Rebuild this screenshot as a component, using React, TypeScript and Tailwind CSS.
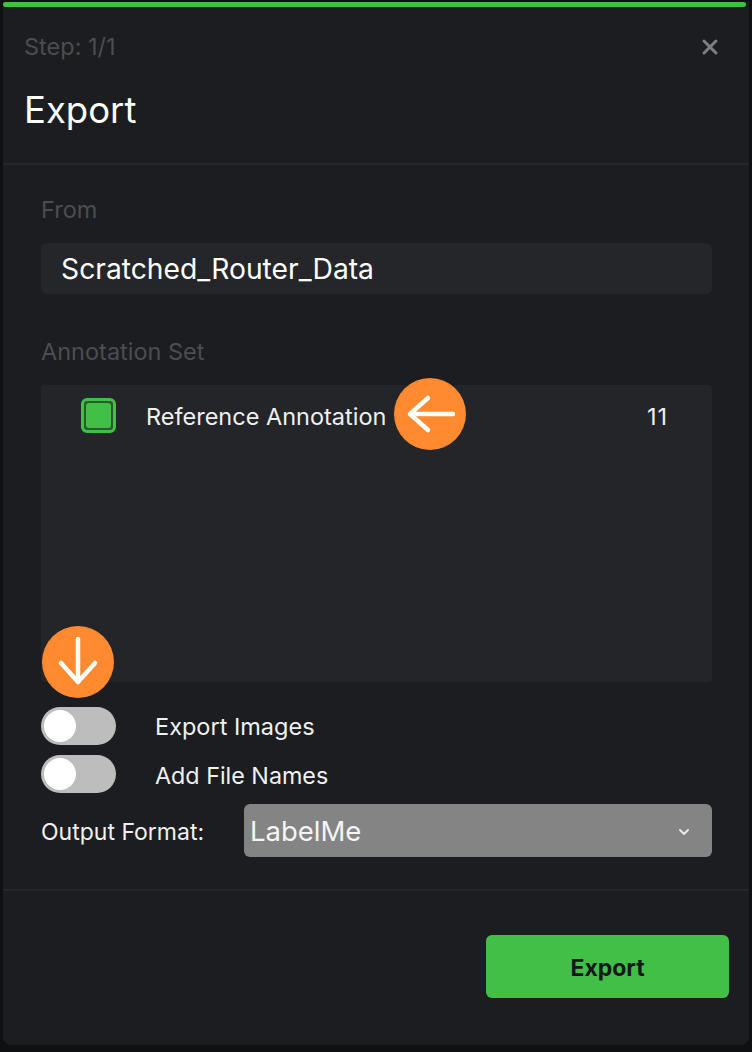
import { X, ChevronDown } from "lucide-react";

function Toggle() {
  return (
    <div className="flex h-[38px] w-[75px] shrink-0 items-center rounded-full bg-[#bdbdbd] pl-[3px]">
      <div className="size-[32px] rounded-full bg-white" />
    </div>
  );
}

export default function App() {
  return (
    <div className="h-[1052px] w-[752px] overflow-hidden bg-[#0e1012] pt-[2px] pl-[3px] font-['Inter',sans-serif]">
      <div className="relative flex h-[1043px] w-[746px] flex-col rounded-b-lg bg-[#1b1d20]">
        <div className="h-[5px] w-[743px] rounded-full bg-[#41bf46]" />

        {/* header */}
        <div className="flex h-[158px] flex-col border-b-2 border-[#25272a] pl-[21px] pr-[28px]">
          <div className="mt-[25px] flex items-center justify-between">
            <span className="text-[23.5px] leading-[30px] text-[#4b4d50]">Step: 1/1</span>
            <X className="mr-[-1px] size-[24px] text-[#7d7e80]" strokeWidth={3} />
          </div>
          <h2 className="mt-[26px] text-[36.5px] leading-[44px] text-white">Export</h2>
        </div>

        {/* body */}
        <div className="flex h-[726px] flex-col border-b-2 border-[#25272a] px-[38px]">
          <label className="mt-[32px] text-[23.5px] leading-[26px] text-[#4b4d50]">From</label>
          <div className="mt-[20px] flex h-[51px] w-[671px] items-center rounded-md bg-[#24262a] px-[20px] pt-[2px] text-[28.25px] text-white">
            Scratched_Router_Data
          </div>

          <label className="mt-[45px] text-[23.5px] leading-[26px] text-[#4b4d50]">Annotation Set</label>
          <div className="mt-[20px] h-[297px] w-[671px] rounded-sm bg-[#232529] pl-[40px] pr-[44px] pt-[13px]">
            <div className="flex h-[35px] items-center">
              <div className="flex size-[35px] items-center justify-center rounded-md border-[3px] border-[#41bf46] bg-[#2c5a30]">
                <div className="size-[25px] rounded-[3px] bg-[#41bf46]" />
              </div>
              <span className="ml-[30px] pt-[3px] text-[23.5px] leading-[32px] text-[#f0f0f0]">Reference Annotation</span>
              <span className="ml-auto pt-[3px] text-[23.5px] leading-[32px] tracking-[1px] text-[#f0f0f0]">11</span>
            </div>
          </div>

          <div className="mt-[25px] flex items-center">
            <Toggle />
            <span className="ml-[39px] pt-[1px] text-[23.5px] leading-[36px] text-[#f0f0f0]">Export Images</span>
          </div>
          <div className="mt-[10px] flex items-center">
            <Toggle />
            <span className="ml-[39px] pt-[3px] text-[23.3px] leading-[34px] text-[#f0f0f0]">Add File Names</span>
          </div>
          <div className="mt-[11px] flex items-center">
            <span className="w-[203px] shrink-0 pt-[2px] text-[23px] leading-[36px] text-[#f0f0f0]">Output Format:</span>
            <div className="flex h-[53px] w-[468px] shrink-0 items-center justify-between rounded-md bg-[#848484] pl-[6px] pr-[20px] pt-[2px] text-[27.5px] text-[#f5f5f5]">
              LabelMe
              <ChevronDown className="size-[16px] text-[#e8e8e8]" strokeWidth={3} />
            </div>
          </div>
        </div>

        {/* footer */}
        <div className="flex flex-1 items-start justify-end pr-[20px] pt-[44px]">
          <button className="h-[63px] w-[243px] rounded-md bg-[#41bf46] pt-[3px] text-[23px] font-bold text-[#15171a]">
            Export
          </button>
        </div>

        {/* annotation markers */}
        <div className="absolute left-[391px] top-[376px] flex size-[72px] items-center justify-center rounded-full bg-[#ff8a30]">
          <svg viewBox="0 0 72 72" className="size-[72px]" fill="none" stroke="white" strokeWidth="4.5" strokeLinecap="round" strokeLinejoin="round">
            <path d="M59 36H16M34 20L16 36l18 16" />
          </svg>
        </div>
        <div className="absolute left-[39px] top-[624px] flex size-[72px] items-center justify-center rounded-full bg-[#ff8a30]">
          <svg viewBox="0 0 72 72" className="size-[72px]" fill="none" stroke="white" strokeWidth="4.5" strokeLinecap="round" strokeLinejoin="round">
            <path d="M36 13v43M19 37l17 19 17-19" />
          </svg>
        </div>
      </div>
    </div>
  );
}
